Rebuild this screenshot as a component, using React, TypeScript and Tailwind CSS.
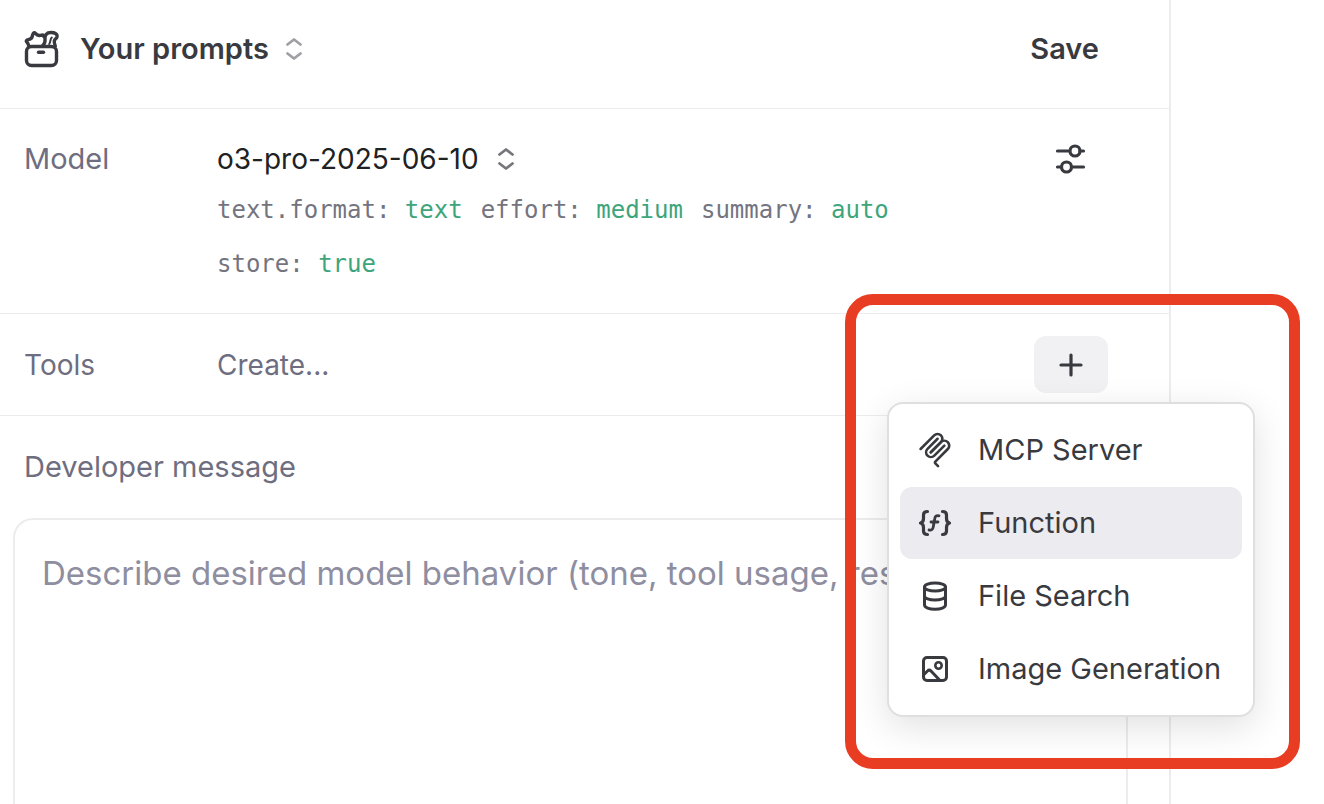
import React, { useState } from "react";

const iconProps = {
  fill: "none",
  stroke: "currentColor",
  strokeLinecap: "round" as const,
  strokeLinejoin: "round" as const,
  "aria-hidden": true,
};

function PromptBoxIcon() {
  return (
    <svg width="36" height="40" viewBox="0 0 36 40" strokeWidth="3.400" {...iconProps}>
      <rect x="2.500" y="17.500" width="30" height="19" rx="5" />
      <path d="M14.500 23.300h5" />
      <path d="M5 17.500C4.300 15.500 4.300 14.500 2.800 13c-1-1 0-2.200 1.400-2.400 2.600-.3 3.700-.8 4-3 .3-1.600.4-2.400 1-3.200.6-1 1.500-.8 2.200 0 1.400 1.700 2.800 2.400 5 1.900 2-.4 4.300-.5 3.600 1.400" />
      <path d="M19 16c2-1.500 2.300-3 2-5.800C20.500 6 22.700 3.500 27 3.500c4 0 6.500 1.700 6 4.300-.4 1.800-2.300 2-2.700 4-.3 1.600.2 3 1 5.200" />
      <path d="M27.800 8.500c-2 1.500-.8 4-2.600 6.500" strokeWidth="2" />
    </svg>
  );
}

function UpDownIcon() {
  return (
    <svg width="18" height="24" viewBox="0 0 18 24" strokeWidth="2.800" {...iconProps}>
      <path d="M2.500 7.500 9 2.500 15.500 7.500M2.500 16.500 9 21.500 15.500 16.500" />
    </svg>
  );
}

function SlidersIcon() {
  return (
    <svg width="32" height="32" viewBox="0 0 32 32" strokeWidth="3.200" {...iconProps}>
      <path d="M2.500 8h11M25 8h3.500M2.500 24h3.500M17 24h11.500" />
      <circle cx="20" cy="8" r="5" />
      <circle cx="11.500" cy="24" r="5" />
    </svg>
  );
}

function PlusIcon() {
  return (
    <svg width="26" height="26" viewBox="0 0 26 26" strokeWidth="3.200" {...iconProps}>
      <path d="M13 3v20M3 13h20" />
    </svg>
  );
}

function McpIcon() {
  return (
    <svg width="36" height="36" viewBox="0 0 180 180" strokeWidth="13" {...iconProps}>
      <path d="M18 84.853 85.882 16.971c9.373-9.373 24.569-9.373 33.941 0 9.373 9.372 9.373 24.568 0 33.941L68.558 102.177" />
      <path d="m69.265 101.470 50.558-50.558c9.373-9.373 24.569-9.373 33.942 0l.353.353c9.373 9.373 9.373 24.569 0 33.941L92.725 146.600c-3.124 3.124-3.124 8.189 0 11.313l12.606 12.607" />
      <path d="M102.853 33.941 52.648 84.146c-9.372 9.372-9.372 24.568 0 33.941 9.373 9.372 24.569 9.372 33.941 0l50.205-50.205" />
    </svg>
  );
}

function FunctionIcon() {
  return (
    <svg width="36" height="30" viewBox="0 0 36 30" strokeWidth="3.200" {...iconProps}>
      <path d="M10.500 3.500C7.500 3.500 6.500 5 6.500 7v3.500c0 2.500-1 4-3 4.500 2 .5 3 2 3 4.500V23c0 2 1 3.500 4 3.500" />
      <path d="M25.500 3.500c3 0 4 1.500 4 3.500v3.500c0 2.500 1 4 3 4.500-2 .5-3 2-3 4.500V23c0 2-1 3.500-4 3.500" />
      <path d="M22 7.800c-2.700-.6-4 .7-4.300 3l-1.400 8c-.4 2.500-1.600 3.700-4.300 3.200M14 14h7" strokeWidth="2.800" />
    </svg>
  );
}

function DatabaseIcon() {
  return (
    <svg width="30" height="32" viewBox="0 0 30 32" strokeWidth="3" {...iconProps}>
      <ellipse cx="15" cy="7" rx="10.500" ry="4" />
      <path d="M4.500 7v18c0 2.500 4.700 4.300 10.500 4.300s10.500-1.800 10.500-4.300V7M4.500 16c0 2.300 4.700 4 10.500 4s10.500-1.700 10.500-4" />
    </svg>
  );
}

function ImageIcon() {
  return (
    <svg width="30" height="30" viewBox="0 0 30 30" strokeWidth="3" {...iconProps}>
      <rect x="3.500" y="3.500" width="23" height="23" rx="3.500" />
      <circle cx="18.500" cy="11.500" r="3.200" strokeWidth="2.600" />
      <path d="m3.500 21 4-4c1.200-1.200 2.300-1.200 3.500 0l9 9.500" />
    </svg>
  );
}

const tools = [
  { label: "MCP Server", icon: <McpIcon /> },
  { label: "Function", icon: <FunctionIcon /> },
  { label: "File Search", icon: <DatabaseIcon /> },
  { label: "Image Generation", icon: <ImageIcon /> },
];

const settings = [
  { name: "text.format:", value: "text" },
  { name: "effort:", value: "medium" },
  { name: "summary:", value: "auto" },
  { name: "store:", value: "true" },
];

export default function App() {
  const [active, setActive] = useState("Function");

  return (
    <div className="flex h-screen overflow-hidden bg-white font-[Inter,sans-serif] text-[29px] leading-10 text-[#393a3f]">
      <main className="flex min-w-0 flex-1 flex-col border-r-2 border-[#ececec]">
        <header className="flex h-[109px] shrink-0 items-center justify-between border-b border-[#ececec] pr-[70px] pb-2.5 pl-6">
          <button className="flex items-center gap-4 font-semibold">
            <span className="flex items-center gap-5">
              <PromptBoxIcon />
              Your prompts
            </span>
            <span className="text-[#a0a0a4]">
              <UpDownIcon />
            </span>
          </button>
          <button className="font-semibold">Save</button>
        </header>

        <section className="flex h-[205px] shrink-0 items-start border-b border-[#ececec] pt-[30px] pr-[82px] pl-6">
          <h2 className="w-[193px] shrink-0 text-[#6e6e80]">Model</h2>
          <div className="min-w-0 flex-1">
            <button className="flex items-center gap-[18px] text-[28px] text-[#202123]">
              o3-pro-2025-06-10
              <span className="text-[#77777b]">
                <UpDownIcon />
              </span>
            </button>
            <div className="mt-1 flex max-w-[700px] flex-wrap gap-x-[18px] font-['DejaVu_Sans_Mono',monospace] text-2xl leading-[54px] text-[#74747f]">
              {settings.map((s) => (
                <span key={s.name}>
                  {s.name} <span className="text-[#3da57b]">{s.value}</span>
                </span>
              ))}
            </div>
          </div>
          <button aria-label="Model settings" className="mt-1">
            <SlidersIcon />
          </button>
        </section>

        <section className="flex h-[102px] shrink-0 items-center border-b border-[#ececec] pr-[61px] pl-6">
          <h2 className="w-[193px] shrink-0 text-[28px] text-[#6e6e80]">Tools</h2>
          <span className="flex-1 text-[28px] text-[#6e6e80]">Create...</span>
          <div className="relative">
            <button
              aria-label="Add tool"
              className="flex h-[57px] w-[74px] items-center justify-center rounded-xl bg-[#f1f1f4]"
            >
              <PlusIcon />
            </button>
            <div
              role="menu"
              className="absolute top-[66px] -right-[147px] z-10 flex w-[368px] flex-col gap-px rounded-2xl border-2 border-[#dfdfe1] bg-white px-[11px] py-2.5 shadow-[0_10px_36px_rgba(0,0,0,0.12)]"
            >
              {tools.map((tool) => (
                <button
                  key={tool.label}
                  role="menuitem"
                  onMouseEnter={() => setActive(tool.label)}
                  className={`flex h-[72px] w-full items-center gap-6 rounded-xl px-4 whitespace-nowrap ${
                    active === tool.label ? "bg-[#ebebf0]" : ""
                  }`}
                >
                  <span className="flex w-[38px] shrink-0 justify-center">{tool.icon}</span>
                  {tool.label}
                </button>
              ))}
            </div>
            <div className="pointer-events-none absolute -top-[42px] -left-[189px] z-20 h-[475px] w-[455px] rounded-[28px] border-[11px] border-[#e93d23]" />
          </div>
        </section>

        <section className="flex min-h-0 flex-1 flex-col pt-[31px] pr-[41px] pl-[13px]">
          <label htmlFor="developer-message" className="mb-[31px] pl-[11px] text-[#6e6e80]">
            Developer message
          </label>
          <textarea
            id="developer-message"
            className="w-full flex-1 resize-none rounded-t-[20px] border-2 border-b-0 border-[#ececec] px-[27px] pt-[31px] text-[33px] leading-[44px] outline-none placeholder:text-[#8e8ea0]"
            placeholder="Describe desired model behavior (tone, tool usage, response)"
          />
        </section>
      </main>
      <aside className="w-[153px] shrink-0" />
    </div>
  );
}
